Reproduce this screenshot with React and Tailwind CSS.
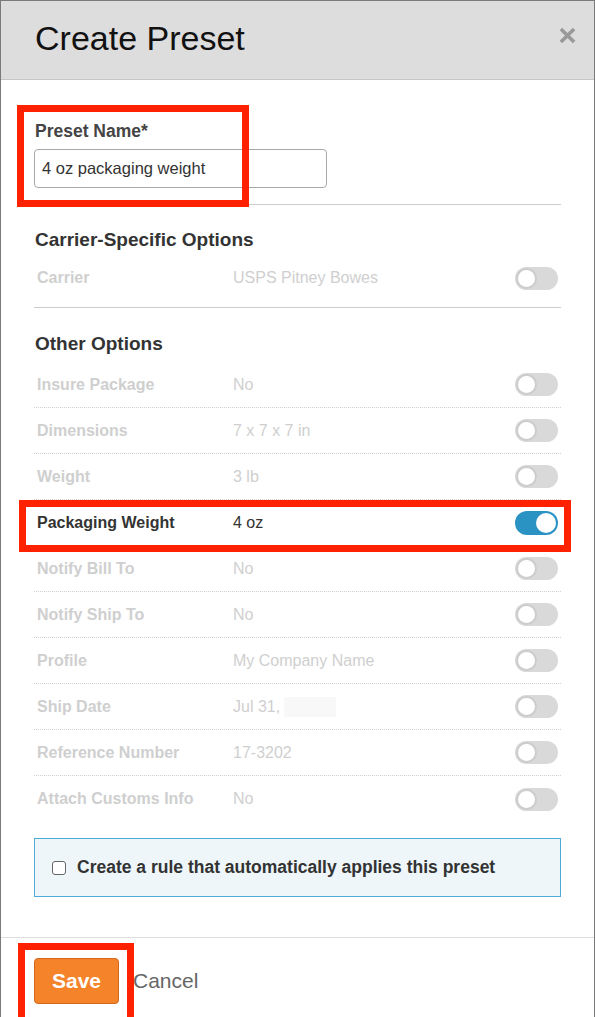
import React from 'react';

const rows = [
  { label: 'Insure Package', value: 'No' },
  { label: 'Dimensions', value: '7 x 7 x 7 in' },
  { label: 'Weight', value: '3 lb' },
  { label: 'Packaging Weight', value: '4 oz', on: true },
  { label: 'Notify Bill To', value: 'No' },
  { label: 'Notify Ship To', value: 'No' },
  { label: 'Profile', value: 'My Company Name' },
  { label: 'Ship Date', value: 'Jul 31,', redacted: true },
  { label: 'Reference Number', value: '17-3202' },
  { label: 'Attach Customs Info', value: 'No' },
];

const Toggle = ({ on }) =>
  on ? (
    <div className="w-[43px] h-[24px] rounded-full bg-[#2b92c4] flex items-center justify-end pr-[2px]">
      <div className="w-[20px] h-[20px] rounded-full bg-white" />
    </div>
  ) : (
    <div className="w-[43px] h-[23px] rounded-full bg-[#d9d9d9] flex items-center pl-[1px]">
      <div className="w-[21px] h-[21px] rounded-full bg-white border-[2px] border-[#cccccc]" />
    </div>
  );

const OptionRow = ({ label, value, on, redacted, last }) => (
  <div
    className={`h-[46px] flex items-center ${last ? '' : 'border-b border-dotted border-[#cfcfcf]'}`}
  >
    <div className={`w-[199px] pl-[3px] text-[16px] font-bold ${on ? 'text-[#333]' : 'text-[#cfcfcf]'}`}>
      {label}
    </div>
    <div className={`flex-1 flex items-center text-[16px] ${on ? 'text-[#333]' : 'text-[#cfcfcf]'}`}>
      {value}
      {redacted && <span className="ml-[4px] inline-block w-[52px] h-[20px] bg-[#f8f8f8]" />}
    </div>
    <div className="pr-[3px]">
      <Toggle on={on} />
    </div>
  </div>
);

export default function App() {
  return (
    <div
      className="relative w-[595px] h-[1017px] bg-white border-t border-x border-[#7a7a7a] overflow-hidden"
      style={{ fontFamily: '"Liberation Sans", Arial, sans-serif' }}
    >
      {/* Header */}
      <div className="h-[79px] bg-[#dddddd] border-b border-[#c6c6c6] flex items-center justify-between pl-[34px] pr-[18px] pb-[5px]">
        <h1 className="text-[34px] text-[#111] leading-none">Create Preset</h1>
        <svg width="17" height="17" viewBox="0 0 16 16" className="mb-[4px]">
          <path d="M3 3 L13 13 M13 3 L3 13" stroke="#999" strokeWidth="3.4" strokeLinecap="square" />
        </svg>
      </div>

      {/* Body */}
      <div className="px-[33px] pt-[41px]">
        <div className="pl-[1px] text-[17.5px] font-bold text-[#444] leading-[20px]">Preset Name*</div>
        <div className="mt-[8px] w-[293px] h-[39px] border border-[#a8a8a8] rounded-[4px] flex items-center pl-[7px] text-[16.5px] text-[#333]">
          4 oz packaging weight
        </div>
        <div className="mt-[16px] h-px bg-[#cccccc]" />

        <div className="mt-[23px] pl-[1px] text-[19px] font-bold text-[#333] leading-[24px]">Carrier-Specific Options</div>
        <div className="mt-[3px] h-[46px] flex items-center">
          <div className="w-[199px] pl-[3px] text-[16px] font-bold text-[#cfcfcf]">Carrier</div>
          <div className="flex-1 text-[16px] text-[#cfcfcf]">USPS Pitney Bowes</div>
          <div className="pr-[3px]">
            <Toggle />
          </div>
        </div>
        <div className="mt-[6px] h-px bg-[#cccccc]" />

        <div className="mt-[24px] pl-[1px] text-[19px] font-bold text-[#333] leading-[24px]">Other Options</div>
        <div className="mt-[6px]">
          {rows.map((r, i) => (
            <OptionRow key={r.label} {...r} last={i === rows.length - 1} />
          ))}
        </div>

        <div className="mt-[16px] h-[59px] bg-[#eef6fa] border border-[#4eaad6] flex items-center pl-[17px]">
          <div className="w-[14px] h-[14px] border-[1.5px] border-[#666] rounded-[3px] bg-white" />
          <span className="ml-[11px] text-[17.5px] font-bold text-[#333]">
            Create a rule that automatically applies this preset
          </span>
        </div>
      </div>

      {/* Footer */}
      <div className="mt-[40px] border-t border-[#dddddd] pt-[20px] px-[33px] flex items-center">
        <button className="w-[85px] h-[46px] bg-[#f5832a] border border-[#d2691c] rounded-[4px] text-white text-[21px] font-bold">
          Save
        </button>
        <span className="ml-[14px] text-[21px] text-[#666]">Cancel</span>
      </div>

      {/* Annotation boxes */}
      <div className="absolute left-[16px] top-[104px] w-[232px] h-[102px] border-[7px] border-[#ff2200]" />
      <div className="absolute left-[18px] top-[499px] w-[552px] h-[52px] border-[7px] border-[#ff2200]" />
      <div className="absolute left-[17px] top-[942px] w-[116px] h-[90px] border-[7px] border-[#ff2200]" />
    </div>
  );
}
